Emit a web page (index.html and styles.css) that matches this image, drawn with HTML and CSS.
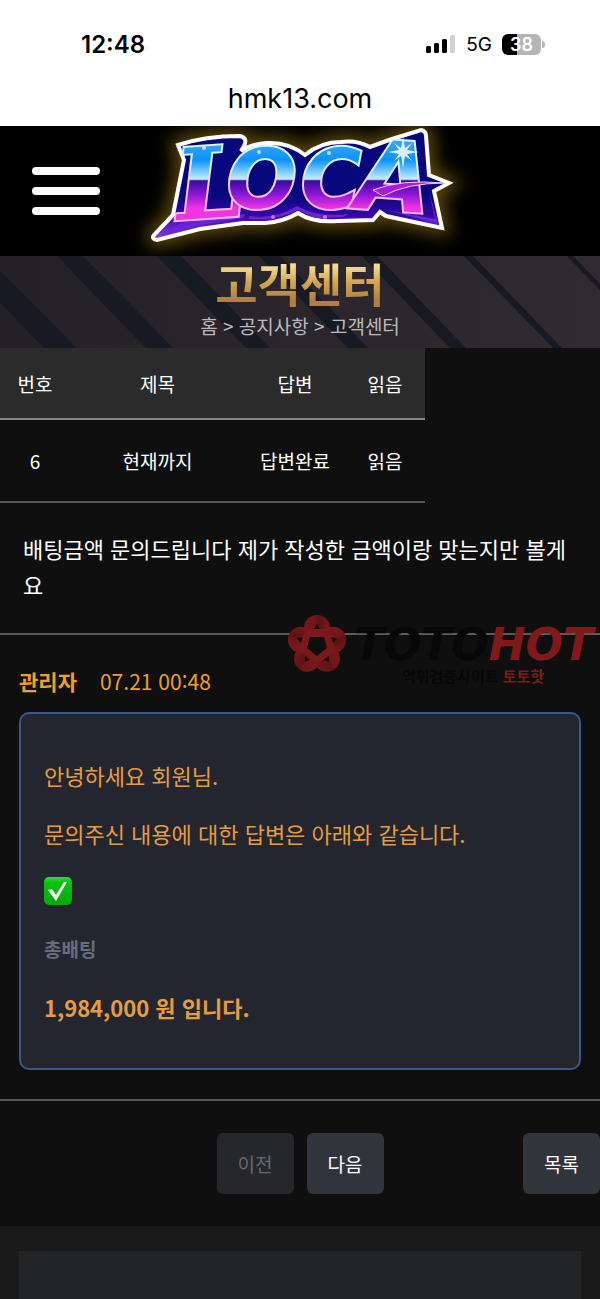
FILE: index.html
```html
<!DOCTYPE html>
<html lang="ko">
<head>
    <meta charset="UTF-8">
    <meta name="viewport" content="width=device-width, initial-scale=1.0">
    <title>고객센터</title>
    <link rel="stylesheet" href="styles.css">
</head>
<body>
    <div class="browser-bar">
        <div class="status">
            <span class="time">12:48</span>
            <div class="status-icons">
                <svg width="30" height="18" viewBox="0 0 30 18">
                    <rect x="0" y="11" width="5" height="7" rx="1.5"/>
                    <rect x="8" y="8" width="5" height="10" rx="1.5"/>
                    <rect x="16" y="4" width="5" height="14" rx="1.5"/>
                    <rect x="24" y="0" width="5" height="18" rx="1.5" fill="#d2d2d2"/>
                </svg>
                <span class="network">5G</span>
                <div class="battery"><span>38</span></div>
            </div>
        </div>
        <div class="address">hmk13.com</div>
    </div>

    <header class="header">
        <button class="menu-button" aria-label="메뉴"><span></span><span></span><span></span></button>
        <a class="logo" href="#" aria-label="LOCA">
            <svg width="310" height="130" viewBox="0 0 310 130">
                <defs>
                    <linearGradient id="face" gradientUnits="userSpaceOnUse" x1="0" y1="14" x2="0" y2="94">
                        <stop offset="0" stop-color="#3aa8f8"/>
                        <stop offset="0.25" stop-color="#0c93fb"/>
                        <stop offset="0.49" stop-color="#c4efff"/>
                        <stop offset="0.51" stop-color="#3a0b9c"/>
                        <stop offset="0.68" stop-color="#8a16d6"/>
                        <stop offset="0.85" stop-color="#f034e0"/>
                    </linearGradient>
                    <linearGradient id="rim" gradientUnits="userSpaceOnUse" x1="0" y1="0" x2="0" y2="115">
                        <stop offset="0.6" stop-color="#08087c"/>
                        <stop offset="0.78" stop-color="#3508a4"/>
                        <stop offset="1" stop-color="#9a3cf0"/>
                    </linearGradient>
                    <linearGradient id="edge" gradientUnits="userSpaceOnUse" x1="0" y1="14" x2="0" y2="94">
                        <stop offset="0.3" stop-color="#d9f6ff"/>
                        <stop offset="0.7" stop-color="#ffb8f4"/>
                    </linearGradient>
                    <filter id="glow" x="-20%" y="-40%" width="140%" height="180%">
                        <feGaussianBlur stdDeviation="9"/>
                    </filter>
                    <path id="plate" d="M33 19Q60 10 95 10Q103 12 99 20L96 25Q106 18 122 17Q144 16 160 29Q176 16 196 16Q212 14 225 21L244 14L276 4Q281 5 281 10L284 49L304 57L289 65L297 102L241 90L235 86L228 94L193 95Q168 97 153 87Q138 96 120 97L98 97L55 103L12 114Q6 113 9 109L28 89L39 34Z"/>
                </defs>
                <use href="#plate" fill="#8a6a18" stroke="#8a6a18" stroke-width="14" filter="url(#glow)" opacity="0.7"/>
                <use href="#plate" fill="url(#rim)" stroke="#fff" stroke-width="4"/>
                <path d="M16 110L36 97L100 88L98 92L56 99Z M104 90Q130 94 152 80Q172 92 204 88L198 91L170 92L153 84Q132 95 104 93Z M242 84L290 93L284 66L293 98Z" fill="#6a24d8"/>
                <text class="logo-text" fill="url(#face)" stroke="url(#edge)" stroke-width="4"><tspan class="logo-serif" x="33" y="94" rotate="-4" font-size="98">L</tspan><tspan x="82" y="82" font-size="82">O</tspan><tspan x="156" y="82" font-size="82">C</tspan><tspan x="210" y="82" rotate="4" font-size="96">A</tspan></text>
                <path d="M228 64Q255 53 300 57Q262 57 238 70Z" fill="#a51be0" stroke="#ffc8f6" stroke-width="1"/>
                <path d="M258 11L260 22L267 17L262 24L274 26L262 28L267 35L260 30L258 42L256 30L249 35L254 28L243 26L254 24L249 17L256 22Z" fill="#fff" opacity="0.85"/>
                <circle cx="59" cy="22" r="2" fill="#fff" opacity="0.7"/>
                <circle cx="114" cy="26" r="2" fill="#fff" opacity="0.7"/>
                <circle cx="184" cy="27" r="2" fill="#fff" opacity="0.7"/>
                <circle cx="128" cy="91" r="2" fill="#f49cff" opacity="0.7"/>
                <circle cx="180" cy="91" r="2" fill="#f49cff" opacity="0.7"/>
            </svg>
        </a>
    </header>

    <section class="page-title">
        <svg class="stripes" viewBox="0 0 600 92" preserveAspectRatio="xMidYMid slice" aria-hidden="true">
            <path d="M-46 0H-14L76 92H44Z M57 0H83L173 92H146Z M157 0H181L270 92H246Z M259 0H280L368 92H348Z M362 0H377L466 92H450Z M464 0H473L562 92H553Z M567 0H573L662 92H656Z"/>
        </svg>
        <h1>고객센터</h1>
        <nav class="breadcrumb"><a href="#">홈</a> &gt; <a href="#">공지사항</a> &gt; <a href="#">고객센터</a></nav>
    </section>

    <main class="content">
        <table class="inquiry-table">
            <thead>
                <tr>
                    <th class="col-no">번호</th>
                    <th class="col-subject">제목</th>
                    <th class="col-answer">답변</th>
                    <th class="col-read">읽음</th>
                </tr>
            </thead>
            <tbody>
                <tr>
                    <td>6</td>
                    <td>현재까지</td>
                    <td>답변완료</td>
                    <td>읽음</td>
                </tr>
            </tbody>
        </table>

        <div class="question">배팅금액 문의드립니다 제가 작성한 금액이랑 맞는지만 볼게요</div>

        <div class="reply">
            <div class="watermark">
                <svg width="62" height="62" viewBox="-31 -31 62 62">
                    <defs>
                        <linearGradient id="petal" x1="0" y1="0" x2="1" y2="0">
                            <stop offset="0" stop-color="#7a181a"/>
                            <stop offset="0.45" stop-color="#701618"/>
                            <stop offset="0.55" stop-color="#5c1214"/>
                            <stop offset="1" stop-color="#7a181a"/>
                        </linearGradient>
                        <circle id="petal-shape" cx="0" cy="-17" r="13" fill="url(#petal)"/>
                        <path id="hole" d="M0 -21L3 -16H-3Z" fill="#0f0f0f"/>
                    </defs>
                    <use href="#petal-shape"/>
                    <use href="#petal-shape" transform="rotate(72)"/>
                    <use href="#petal-shape" transform="rotate(144)"/>
                    <use href="#petal-shape" transform="rotate(216)"/>
                    <use href="#petal-shape" transform="rotate(288)"/>
                    <path d="M-9 -12H9L14 4L0 14L-14 4Z" fill="none" stroke="#7a181a" stroke-width="8" stroke-linejoin="round"/>
                    <use href="#hole"/>
                    <use href="#hole" transform="rotate(72)"/>
                    <use href="#hole" transform="rotate(144)"/>
                    <use href="#hole" transform="rotate(216)"/>
                    <use href="#hole" transform="rotate(288)"/>
                    <path d="M-7 -8H7L10 3L0 11L-10 3Z" fill="#0f0f0f"/>
                </svg>
                <div class="watermark-text">
                    <div class="watermark-name">TOTO<span>HOT</span></div>
                    <div class="watermark-sub">먹튀검증사이트 <span>토토핫</span></div>
                </div>
            </div>

            <div class="reply-info"><strong>관리자</strong><span>07.21 00:48</span></div>
            <div class="reply-box">
                <p>안녕하세요 회원님.</p>
                <p>문의주신 내용에 대한 답변은 아래와 같습니다.</p>
                <p class="check">
                    <svg width="28" height="28" viewBox="0 0 28 28" role="img" aria-label="완료">
                        <defs>
                            <linearGradient id="green" x1="0" y1="0" x2="0" y2="1">
                                <stop offset="0" stop-color="#3ed64c"/>
                                <stop offset="0.2" stop-color="#06c40e"/>
                                <stop offset="1" stop-color="#05a80b"/>
                            </linearGradient>
                        </defs>
                        <rect width="28" height="28" rx="5" fill="url(#green)"/>
                        <path d="M4 13L8 12L12 18L20 5L23 5L12 24Z" fill="#fff"/>
                    </svg>
                </p>
                <p class="label">총배팅</p>
                <p class="amount">1,984,000 원 입니다.</p>
            </div>
        </div>

        <div class="pager">
            <div class="pager-move">
                <button class="button" disabled>이전</button>
                <button class="button">다음</button>
            </div>
            <button class="button button-list">목록</button>
        </div>
    </main>

    <footer class="footer">
        <div class="footer-box"></div>
    </footer>
</body>
</html>
```
FILE: styles.css
```css
* {
    box-sizing: border-box;
}

body {
    display: flex;
    flex-direction: column;
    min-height: 100vh;
    margin: 0;
    background-color: #0f0f0f;
    color: #fff;
    font-family: "Noto Sans CJK KR", sans-serif;
    font-size: 19px;
}

/* Phone status and address */
.browser-bar {
    height: 126px;
    padding-top: 30px;
    background-color: #fff;
    color: #000;
    font-family: Inter, sans-serif;
}

.status {
    display: flex;
    align-items: center;
    justify-content: space-between;
    height: 28px;
    padding: 0 59px 0 81px;
}

.time {
    font-size: 24px;
    font-weight: 600;
}

.status-icons {
    display: flex;
    align-items: center;
    gap: 10px;
}

.network {
    font-size: 19px;
    font-weight: 400;
}

.battery {
    position: relative;
    width: 39px;
    height: 21px;
    border-radius: 6px;
    background: linear-gradient(to right, #000 38%, #b5b5b5 38%);
    color: #fff;
    font-size: 18px;
    font-weight: 600;
    line-height: 21px;
    text-align: center;
}

.battery::after {
    content: "";
    position: absolute;
    top: 7px;
    right: -4px;
    width: 3px;
    height: 7px;
    border-radius: 0 3px 3px 0;
    background-color: #b5b5b5;
}

.address {
    margin-top: 23px;
    font-size: 27px;
    line-height: 36px;
    text-align: center;
}

/* Header */
.header {
    display: grid;
    grid-template-columns: 1fr auto 1fr;
    align-items: center;
    height: 130px;
    overflow: hidden;
    background-color: #000;
}

.menu-button {
    display: flex;
    flex-direction: column;
    gap: 12px;
    width: 68px;
    margin-left: 32px;
    padding: 0;
    border: none;
    background: none;
    cursor: pointer;
}

.menu-button span {
    height: 8px;
    border-radius: 4px;
    background-color: #fff;
}

.logo svg {
    display: block;
    overflow: visible;
}

.logo-text {
    font-family: "DejaVu Sans", sans-serif;
    font-style: italic;
    font-weight: 700;
    paint-order: stroke;
}

.logo-serif {
    font-family: "DejaVu Serif", serif;
}

/* Title */
.page-title {
    position: relative;
    height: 92px;
    background: linear-gradient(to right, #242126, #302a31);
    text-align: center;
}

.stripes {
    position: absolute;
    inset: 0;
    width: 100%;
    height: 100%;
    fill: #171a22;
}

.page-title h1 {
    position: relative;
    margin: 0;
    background: linear-gradient(to bottom, #f5dc92 20%, #d3a550 50%, #b08040 85%);
    background-clip: text;
    -webkit-background-clip: text;
    color: transparent;
    font-size: 46px;
    font-weight: 700;
    line-height: 52px;
}

.breadcrumb {
    position: relative;
    color: #bbb;
    line-height: 36px;
}

.breadcrumb a {
    color: inherit;
    text-decoration: none;
}

/* Inquiry */
.inquiry-table {
    border-collapse: collapse;
    table-layout: fixed;
    width: 425px;
    text-align: center;
}

.inquiry-table th {
    height: 71px;
    padding: 0;
    border-bottom: 2px solid #858585;
    background-color: #2b2b2b;
    font-weight: 400;
}

.inquiry-table td {
    height: 83px;
    padding: 0;
    border-bottom: 2px solid #555;
}

.col-no {
    width: 70px;
}

.col-subject {
    width: 175px;
}

.col-answer {
    width: 100px;
}

.col-read {
    width: 80px;
}

.question {
    padding: 27px 22px 31px 23px;
    border-bottom: 2px solid #5c5c5c;
    font-size: 22px;
    line-height: 36px;
}

.reply {
    position: relative;
    padding: 29px 19px;
    border-bottom: 2px solid #555;
    font-size: 22px;
}

.reply-info {
    display: flex;
    align-items: center;
    gap: 23px;
    height: 34px;
    margin-bottom: 14px;
    color: #f0a020;
    font-size: 21px;
}

.reply-box {
    display: flex;
    flex-direction: column;
    gap: 26px;
    padding: 45px 23px;
    border: 2px solid #37598f;
    border-radius: 10px;
    background-color: #24262f;
    color: #e69c40;
    line-height: 32px;
}

.reply-box p {
    margin: 0;
}

.reply-box .check {
    display: flex;
    align-items: center;
    height: 32px;
}

.reply-box .label {
    color: #686d7c;
    font-size: 19px;
    font-weight: 700;
}

.reply-box .amount {
    font-weight: 700;
}

/* Watermark over the divider */
.watermark {
    position: absolute;
    top: -21px;
    right: 7px;
    display: flex;
    gap: 6px;
    color: #080808;
}

.watermark span {
    color: #81191b;
}

.watermark-text {
    padding-top: 10px;
}

.watermark-name {
    font-family: "DejaVu Sans", sans-serif;
    font-size: 44px;
    font-style: italic;
    font-weight: 700;
    line-height: 42px;
}

.watermark-sub {
    padding-left: 48px;
    font-size: 15px;
    font-weight: 700;
    line-height: 20px;
}

/* Pager */
.pager {
    display: grid;
    grid-template-columns: 1fr auto 1fr;
    padding: 32px 0;
}

.pager-move {
    display: flex;
    grid-column: 2;
    gap: 13px;
}

.button {
    width: 77px;
    height: 61px;
    padding: 0;
    border: none;
    border-radius: 6px;
    background-color: #30343b;
    color: #fff;
    font-family: inherit;
    font-size: 19px;
    cursor: pointer;
}

.button:disabled {
    background-color: #26272b;
    color: #66686c;
    cursor: default;
}

.button-list {
    justify-self: end;
}

/* Footer */
.footer {
    display: flex;
    flex: 1;
    padding: 25px 19px 0;
    background-color: #1a1a1a;
}

.footer-box {
    flex: 1;
    background-color: #232425;
}
```
